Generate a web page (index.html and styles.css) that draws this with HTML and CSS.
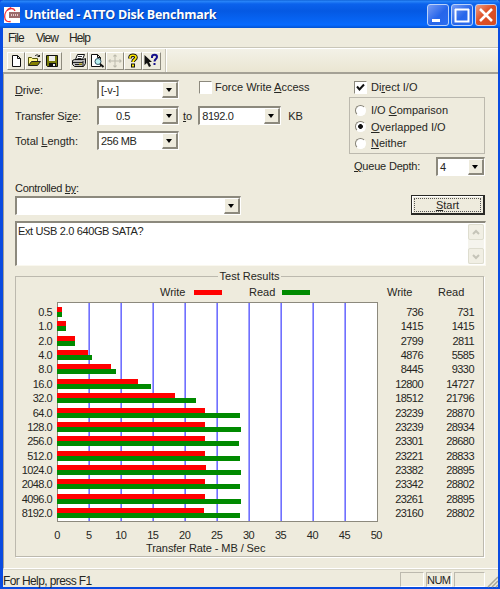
FILE: index.html
```html
<!DOCTYPE html>
<html lang="en">
<head>
<meta charset="utf-8">
<title>Untitled - ATTO Disk Benchmark</title>
<link rel="stylesheet" href="styles.css">
</head>
<body>
<div class="window">
  <header class="titlebar">
    <svg class="logo" width="16" height="16" viewBox="0 0 16 16"><rect width="16" height="16" fill="#fff"/><rect x="5" y="5" width="11" height="6" fill="#9b6b6b"/><path d="M7 8h1M9 8h1M11 8h1M13 8h1" stroke="#e8caca" stroke-width="2"/><path d="M7 .7C3 2 .6 6 .7 10c0 4 3 5 6 4.500M3 3.500C6 .5 10 1 11 4" fill="none" stroke="#f03038" stroke-width="1.300"/></svg>
    <h1>Untitled - ATTO Disk Benchmark</h1>
    <div class="caption">
      <span class="cap"><svg width="20" height="20"><path d="M4 15.500h8" stroke="#fff" stroke-width="3"/></svg></span>
      <span class="cap"><svg width="20" height="20"><path d="M3 4.500h14M3.500 4v12.500h13V4" fill="none" stroke="#fff" stroke-width="2"/></svg></span>
      <span class="cap close"><svg width="20" height="20"><path d="M4 4l12 12M16 4L4 16" stroke="#fff" stroke-width="2.600"/></svg></span>
    </div>
  </header>
  <nav class="menu"><span class="m1">File</span><span class="m2">View</span><span class="m3">Help</span></nav>
  <div class="toolbar">
    <div class="tools">
      <span class="tool"><svg width="16" height="16"><path d="M4.500 2.500h5l3 3v8h-8zM9.500 2.500v3h3" fill="#fff" stroke="#111"/></svg></span>
      <span class="tool"><svg width="16" height="16"><path d="M2.500 12.500v-8h3l1 1h5v3" fill="#fff68a" stroke="#55550b"/><path d="M2.500 12.500l3-4h9l-3 4z" fill="#858000" stroke="#222"/><path d="M9 3c2-2 4-1 4 1M11.500 3.500h2V2" fill="none" stroke="#111"/></svg></span>
      <span class="tool"><svg width="16" height="16"><path d="M2.500 2.500h11v11h-10l-1-1z" fill="#777b08" stroke="#111"/><path d="M5 3h6v5H5z" fill="#eee"/><path d="M5 10h7v4H5z" fill="#111"/><path d="M9 11h2v2H9z" fill="#eee"/></svg></span>
      <span class="tool print"><svg width="16" height="16"><path d="M4.500 6.500l2-5h7l-2 5" fill="#fff" stroke="#111"/><path d="M7 3.500h4M6.500 5.500h4" stroke="#333"/><path d="M1.500 7.500l2-1h9l2-1v5l-2 3h-9l-2-2z" fill="#bbb" stroke="#111"/><path d="M2 9.500h10M4 11.500h7M12 8v5" stroke="#222"/><path d="M8 11h3" stroke="#d5bd00"/></svg></span>
      <span class="tool"><svg width="16" height="16"><path d="M2.500 1.500h6l3 3v9h-9zM8.500 1.500v3h3" fill="#fff" stroke="#111"/><circle cx="9" cy="8.500" r="3" fill="#b8f0f0" stroke="#356"/><path d="M11 11l3.500 3" stroke="#111" stroke-width="2"/></svg></span>
      <span class="tool"><svg width="16" height="16"><path d="M8 2v12M2 8h12" stroke="#bbb9ac"/><path d="M6.500 3.500L8 2l1.500 1.500M6.500 12.500L8 14l1.500-1.500M3.500 6.500L2 8l1.500 1.500M12.500 6.500L14 8l-1.500 1.500" fill="none" stroke="#bbb9ac" stroke-width="1.200"/></svg></span>
      <span class="tool"><svg width="16" height="16"><path d="M5 5.500V4.500C5 1.500 11 1.500 11 4.500c0 2-3 2-3 4.500" fill="none" stroke="#111" stroke-width="3.600"/><path d="M5 5.500V4.500C5 1.500 11 1.500 11 4.500c0 2-3 2-3 4.500" fill="none" stroke="#ffe900" stroke-width="1.700"/><path d="M6 10.500h4v4H6z" fill="#111"/><path d="M7 11.500h2v2H7z" fill="#ffe900"/></svg></span>
      <span class="tool"><svg width="16" height="16"><path d="M1.500 2v10l2.500-2 2 4 2-1-2-4h3z" fill="#111"/><path d="M9 5V4c0-3 5-3 5 0 0 2-2.500 2-2.500 4.500M11.500 10v2" fill="none" stroke="#15108b" stroke-width="2"/></svg></span>
    </div>
    <div class="toolrest"></div>
  </div>
  <main class="client">
    <section class="settings">
      <div class="fields">
        <label class="lab drive"><u>D</u>rive:</label><span class="combo drv">[-v-]<i class="arr"></i></span>
        <div class="force"><i class="check"></i><span>Force Write <u>A</u>ccess</span></div>
        <label class="lab size">Transfer Si<u>z</u>e:</label><span class="combo half">0.5<i class="arr"></i></span>
        <div class="upto"><span><u>t</u>o</span><span class="combo">8192.0<i class="arr"></i></span><span class="kb">KB</span></div>
        <label class="lab len">Total <u>L</u>ength:</label><span class="combo mb">256 MB<i class="arr"></i></span>
      </div>
      <div class="options">
        <div class="direct"><i class="check"><svg width="11" height="11"><path d="M2 4.500l2.500 3L9 2.500" fill="none" stroke="#111" stroke-width="2"/></svg></i><span>Di<u>r</u>ect I/O</span></div>
        <div class="radios">
          <div><i class="radio"></i><span class="r1">I/O <u>C</u>omparison</span></div>
          <div><i class="radio on"></i><span class="r2"><u>O</u>verlapped I/O</span></div>
          <div><i class="radio"></i><span class="r3"><u>N</u>either</span></div>
        </div>
        <div class="queue"><span><u>Q</u>ueue Depth:</span><span class="combo">4<i class="arr"></i></span></div>
      </div>
    </section>
    <div class="controlled">Controlled <u>by</u>:</div>
    <div class="startrow"><span class="combo wide"><i class="arr"></i></span><button class="start"><span><u>S</u>tart</span></button></div>
    <div class="notes"><span>Ext USB 2.0 640GB SATA?</span>
      <div class="scroll"><i><svg width="14" height="15"><path d="M4 9l3-3 3 3" fill="none" stroke="#c5c4b8" stroke-width="2"/></svg></i><i><svg width="14" height="15"><path d="M4 6l3 3 3-3" fill="none" stroke="#c5c4b8" stroke-width="2"/></svg></i></div>
    </div>
    <fieldset class="results">
      <legend>Test Results</legend>
      <div class="keys"><span class="kw">Write</span><i class="red"></i><span class="kr">Read</span><i class="green"></i><span class="hw">Write</span><span class="hr">Read</span></div>
      <div class="chart">
        <div class="names" id="names"></div>
        <div class="plot" id="plot"></div>
        <div class="vals" id="writes"></div>
        <div class="vals reads" id="reads"></div>
      </div>
      <div class="axis" id="axis"></div>
      <div class="rate">Transfer Rate - MB / Sec</div>
    </fieldset>
  </main>
  <footer class="status"><span class="help">For Help, press F1</span><span class="pane p1"></span><span class="pane p2">NUM</span><span class="pane p3"></span><svg class="grip" width="12" height="12"><path d="M1 11L11 1M5 11l6-6M9 11l2-2" stroke="#aaa798" stroke-width="1.500"/></svg></footer>
</div>
<script src="chart.js"></script>
</body>
</html>
```
FILE: styles.css
```css
* { box-sizing: border-box; }
body { margin: 0; background: #eeebdd; font: 11px/14px "Liberation Sans", Arial, sans-serif; color: #262622; white-space: nowrap; overflow: hidden; }
u { text-decoration: underline; text-underline-offset: 1px; }
svg { display: block; }
.window { width: 500px; height: 589px; border: solid #0a4be0; border-width: 0 2px 2px 3px; display: flex; flex-direction: column; background: #eeebdd; }
.titlebar { height: 28px; flex: none; margin: 0 -2px 0 -3px; padding: 2px 3px 0 4px; display: flex; align-items: center; background: linear-gradient(#0757cd 0, #2b88fa 1px, #0b62ec 4px, #0559e3 11px, #0765f5 21px, #076aff 25px, #0352d0 28px); border-radius: 4px 4px 0 0; }
h1 { margin: 0 0 0 4px; color: #fff; font: bold 12.500px/18px "Open Sans", sans-serif; letter-spacing: -.27px; text-shadow: 1px 1px #093c9b; }
.caption { margin-left: auto; display: flex; gap: 2px; }
.cap { width: 22px; height: 22px; border: 1px solid #b9d2fa; border-radius: 3px; background: linear-gradient(135deg, #779cf4, #2665ea 55%, #2a6df0); }
.close { background: linear-gradient(135deg, #ee9f84, #de5027 45%, #d44c20); }
.menu { height: 20px; flex: none; padding: 2px 0 0 5px; display: flex; font-size: 12px; line-height: 16px; border-bottom: 1px solid #c9c6b8; }
.m1 { width: 28px; letter-spacing: -.9px; }
.m2 { width: 33px; letter-spacing: -1px; }
.m3 { letter-spacing: -.9px; }
.toolbar { height: 24px; flex: none; display: flex; border-top: 1px solid #fff; }
.tools { width: 163px; padding: 3px 0 0 4px; display: flex; border-right: 1px solid #c9c6b8; }
.tool { width: 18.200px; height: 18px; border: 1px solid; border-color: #fff #8e8b7e #8e8b7e #fff; }
.print { margin-left: 8px; }
.toolrest { flex: 1; border-left: 1px solid #fff; background: linear-gradient(#f3f1e7, #eae6d2); }
.client { height: 497px; flex: none; border-top: 2px solid #a4a195; border-left: 1px solid #a4a195; padding: 6px 0 0 11px; border-bottom: 1px solid #fff; }
.settings { display: flex; height: 103px; }
.fields { width: 334px; display: grid; grid-template-columns: 82px 82px 1fr; grid-auto-rows: 25.500px; align-content: start; }
.lab { padding-top: 3px; letter-spacing: -.15px; }
.lab.len { letter-spacing: 0; }
.combo { display: block; position: relative; width: 82px; height: 19px; padding: 1px 0 0 2px; background: #fff; border: solid; border-width: 2px 1px 1px 2px; border-color: #8c897d #fff #fff #8c897d; letter-spacing: -.4px; line-height: 15px; }
.drv { letter-spacing: -.2px; }
.arr { position: absolute; right: 0; top: 0; width: 16px; height: 16px; background: #eeebdd; border: solid; border-width: 1px 2px 2px 1px; border-color: #fff #8c897d #8c897d #fff; }
.arr::after { content: ""; position: absolute; left: 3px; top: 5px; border: solid transparent; border-width: 4px 3.500px 0; border-top-color: #000; }
.half { padding-left: 17px; }
.force, .direct { display: flex; align-items: flex-start; }
.force { padding-left: 20px; gap: 3px; }
.check { width: 13px; height: 13px; margin-top: 1px; background: #fff; border: 1px solid; border-color: #8c897d #fff #fff #8c897d; }
.upto { display: flex; line-height: 20px; padding-left: 4px; }
.upto .combo { margin-left: 6px; width: 83px; }
.kb { margin-left: 7px; }
.options { width: 136px; }
.direct { height: 17px; gap: 4px; padding-left: 5px; }
.radios { height: 57px; border: 1px solid #bcb9ae; padding: 4px 0 0 5px; }
.radios div { display: flex; align-items: center; gap: 5px; height: 16.600px; }
.radio { width: 11px; height: 11px; border-radius: 50%; border: 1px solid; border-color: #858276 #fff #fff #858276; background: #fff; }
.on { background: radial-gradient(circle, #111 0 2px, #fff 2.800px); }
.queue { display: flex; justify-content: space-between; padding: 3px 0 0 5px; line-height: 18px; }
.queue .combo { width: 49px; }
.queue > span:first-child { letter-spacing: -.2px; }
.controlled { height: 13px; margin-top: -1px; line-height: 13px; letter-spacing: -.3px; }
.startrow { display: flex; justify-content: space-between; width: 470px; height: 24px; }
.wide { width: 226px; margin-top: 1px; }
.start { width: 74px; height: 20px; padding: 2px; font: inherit; color: inherit; background: #eeebdd; border: solid #292925; border-width: 1px 2px 2px 1px; box-shadow: inset 1px 1px #fff; }
.start span { display: block; height: 14px; line-height: 12px; border: 1px dotted #555; }
.notes { display: flex; justify-content: space-between; width: 471px; height: 45px; margin-top: 2px; background: #fff; border: solid; border-width: 2px 1px 1px 2px; border-color: #8c897d #faf8ef #faf8ef #8c897d; padding: 1px 1px 0 0; letter-spacing: -.36px; }
.notes > span { padding-left: 1px; }
.scroll { width: 16px; height: 40px; display: flex; flex-direction: column; justify-content: space-between; background: #f5f4ed; }
.scroll i { width: 16px; height: 16px; border: 1px solid #deddcf; border-radius: 2px; background: #f1efe4; }
.results { width: 469px; height: 288px; margin: 3px 0 0; padding: 0; border: 1px solid #bcb9ae; box-shadow: 1px 1px #fff; min-width: 0; }
.results legend { margin: 0 auto; padding: 0 2px; }
.keys { display: flex; height: 19px; padding: 2px 0 0 144px; }
.kw { width: 34px; }
.keys i { width: 28px; height: 5px; margin-top: 5px; }
.kr { margin-left: 27px; width: 33px; }
.hw { margin-left: 77px; width: 51px; }
.red { background: #f00; }
.green { background: #008a00; }
.chart { display: flex; height: 220px; letter-spacing: -.55px; }
.names { width: 36px; margin-right: 5px; padding-top: 3px; text-align: right; }
.names div, .vals div { height: 14.370px; line-height: 14.370px; }
.plot { width: 321px; padding-top: 4px; border: 1px solid #8c897d; background: linear-gradient(#fff, #fff) right / 4px 100% no-repeat, linear-gradient(90deg, transparent 30px, #a5a5ff 30px 31px, #7070ff 31px 32px) 0 0 / 32px 100% #fff; }
.row { height: 14.370px; }
.bar { height: 5px; margin-left: -1px; }
.vals { width: 45px; padding-top: 3px; text-align: right; }
.reads { width: 51px; }
.axis { display: grid; grid-template-columns: repeat(11, 31.950px); width: 352px; margin: 6px 0 0 25px; text-align: center; letter-spacing: -.5px; }
.rate { padding-left: 130px; line-height: 13px; letter-spacing: -.08px; }
.status { flex: 1; display: flex; border-top: 1px solid #d9d6c8; padding-top: 2px; line-height: 18px; }
.help { width: 417px; font-size: 12px; letter-spacing: -.6px; }
.pane { height: 15px; border: 1px solid; border-color: #bcb9ae #fff #fff #bcb9ae; margin-right: 2px; line-height: 15px; }
.p1 { width: 25px; margin-left: -1px; }
.p2 { width: 27px; letter-spacing: -.6px; }
.p3 { width: 32px; }
.grip { margin-left: auto; margin-top: 4px; }
```
FILE: chart.js
```js
const results = [
  ["0.5", 736, 731], ["1.0", 1415, 1415], ["2.0", 2799, 2811],
  ["4.0", 4876, 5585], ["8.0", 8445, 9330], ["16.0", 12800, 14727],
  ["32.0", 18512, 21796], ["64.0", 23239, 28870], ["128.0", 23239, 28934],
  ["256.0", 23301, 28680], ["512.0", 23221, 28833], ["1024.0", 23382, 28895],
  ["2048.0", 23342, 28802], ["4096.0", 23261, 28895], ["8192.0", 23160, 28802]
];
const fill = (id, html) => { document.getElementById(id).innerHTML = html; };
const cells = i => results.map(r => `<div>${r[i]}</div>`).join("");
const bar = (kind, v) => `<div class="bar ${kind}" style="width:${v / 502}%"></div>`;
fill("names", cells(0));
fill("writes", cells(1));
fill("reads", cells(2));
fill("plot", results.map(r => `<div class="row">${bar("red", r[1])}${bar("green", r[2])}</div>`).join(""));
fill("axis", Array.from({ length: 11 }, (_, i) => `<span>${i * 5}</span>`).join(""));
```
